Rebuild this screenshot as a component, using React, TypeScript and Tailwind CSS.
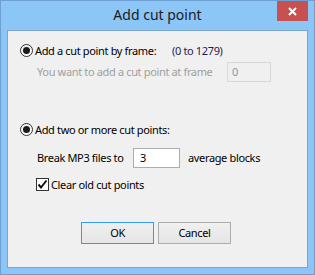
import React from "react";

const font = { fontFamily: '"Noto Sans", "Open Sans", sans-serif' };

function Radio() {
  return (
    <span className="flex h-[13px] w-[13px] shrink-0 items-center justify-center rounded-full border border-[#333333] bg-gradient-to-b from-[#f4f4f4] to-[#ffffff]">
      <span className="h-[7px] w-[7px] rounded-full bg-[#1a1a1a]" />
    </span>
  );
}

function Check() {
  return (
    <span className="flex h-[13px] w-[13px] shrink-0 items-center justify-center border border-[#333333] bg-white">
      <svg width="11" height="11" viewBox="0 0 11 11">
        <path d="M1.5 5.5 L4 8.5 L9.5 1.5" fill="none" stroke="#111" strokeWidth="2" />
      </svg>
    </span>
  );
}

export default function App() {
  return (
    <div
      className="flex h-[275px] w-[315px] flex-col border border-[#6e9fd3] bg-[#8bc6f7] text-[11px] text-black"
      style={font}
    >
      <div className="grid h-[29px] grid-cols-[1fr_auto_1fr] items-start">
        <div />
        <div className="pt-[5px] text-[14px] leading-[18px] text-[#1a1a1a]">Add cut point</div>
        <div className="flex justify-end pr-[6px]">
          <div className="flex h-[20px] w-[31px] items-center justify-center bg-[#c75050]">
            <svg width="9" height="9" viewBox="0 0 9 9">
              <path d="M1 1 L8 8 M8 1 L1 8" stroke="#fff" strokeWidth="2" />
            </svg>
          </div>
        </div>
      </div>
      <div className="mx-[6px] mb-[6px] flex flex-1 flex-col border border-[#7da4cc] bg-[#f0f0f0] pl-[12px] tracking-[-0.35px]">
        <div className="mt-[13px] flex h-[13px] items-center">
          <Radio />
          <span className="ml-[2px] w-[137px] shrink-0 whitespace-nowrap leading-[13px]">Add a cut point by frame:</span>
          <span className="whitespace-nowrap leading-[13px] text-[#1c1c5c]">(0 to 1279)</span>
        </div>
        <div className="mt-[5px] flex h-[20px] items-center pl-[17px] text-[#a0a0a0]">
          <span className="w-[190px] shrink-0 whitespace-nowrap">You want to add a cut point at frame</span>
          <div className="flex h-[20px] w-[44px] shrink-0 items-center border border-[#d9d9d9] bg-[#f0f0f0] pl-[4px] text-[#9090a8]">
            0
          </div>
        </div>
        <div className="mt-[41px] flex h-[13px] items-center">
          <Radio />
          <span className="ml-[2px] whitespace-nowrap leading-[13px]">Add two or more cut points:</span>
        </div>
        <div className="mt-[12px] flex h-[20px] items-center pl-[17px]">
          <span className="w-[96px] shrink-0 whitespace-nowrap">Break MP3 files to</span>
          <div className="flex h-[20px] w-[47px] shrink-0 items-center border border-[#abadb3] bg-white pl-[6px]">3</div>
          <span className="ml-[8px] whitespace-nowrap">average blocks</span>
        </div>
        <div className="mt-[10px] flex h-[13px] items-center pl-[16px]">
          <Check />
          <span className="ml-[2px] whitespace-nowrap leading-[13px]">Clear old cut points</span>
        </div>
        <div className="mt-[31px] flex gap-[4px] pl-[61px]">
          <button className="flex h-[22px] w-[73px] items-center justify-center border border-[#3399ff] bg-gradient-to-b from-[#f0f0f0] to-[#e5e5e5]">
            OK
          </button>
          <button className="flex h-[22px] w-[73px] items-center justify-center border border-[#acacac] bg-gradient-to-b from-[#f0f0f0] to-[#e5e5e5]">
            Cancel
          </button>
        </div>
      </div>
    </div>
  );
}
